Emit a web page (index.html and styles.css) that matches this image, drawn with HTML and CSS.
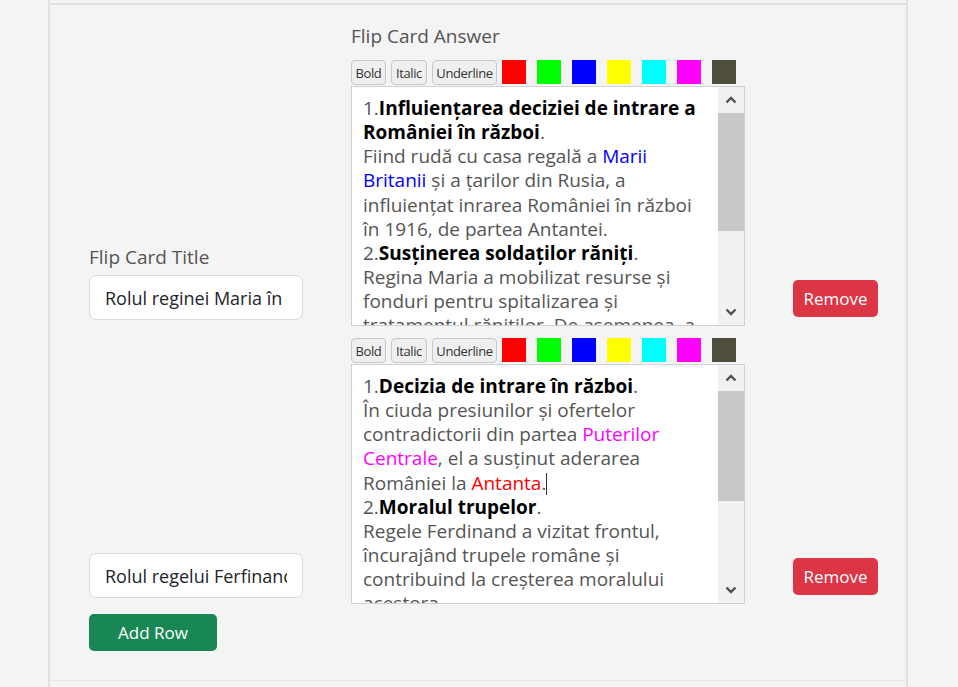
FILE: index.html
```html
<!DOCTYPE html>
<html lang="ro">
<head>
<meta charset="utf-8">
<title>Flip Cards</title>
<link rel="stylesheet" href="styles.css">
</head>
<body>
<div class="table">
  <div class="row">
    <div class="grid">
      <div class="answer-head">Flip Card Answer</div>

      <div class="title-cell r1">
        <label class="label">Flip Card Title</label>
        <input class="title-input" type="text" value="Rolul reginei Maria în Primul Război Mondial">
      </div>
      <div class="answer-cell r1">
        <div class="toolbar">
          <button class="tb-btn w-bold">Bold</button>
          <button class="tb-btn w-italic">Italic</button>
          <button class="tb-btn w-under">Underline</button>
          <span class="swatch red"></span>
          <span class="swatch green"></span>
          <span class="swatch blue"></span>
          <span class="swatch yellow"></span>
          <span class="swatch cyan"></span>
          <span class="swatch magenta"></span>
          <span class="swatch dark"></span>
        </div>
        <div class="editor">
          <div class="editor-content" contenteditable="true">
            <div>1.<b>Influiențarea deciziei de intrare a României în război</b>.</div>
            <div>Fiind rudă cu casa regală a <span class="c-blue">Marii Britanii</span> și a țarilor din Rusia, a influiențat inrarea României în război în 1916, de partea Antantei.</div>
            <div>2.<b>Susținerea soldaților răniți</b>.</div>
            <div>Regina Maria a mobilizat resurse și fonduri pentru spitalizarea și tratamentul rănitilor. De asemenea, a lucrat ca infirmieră în spitalele de campanie.</div>
          </div>
          <div class="scrollbar">
            <div class="sb-btn"><svg width="12" height="8" viewBox="0 0 12 8"><path d="M1.5 6.5 L6 2 L10.5 6.5" fill="none" stroke="#505050" stroke-width="2.4"/></svg></div>
            <div class="sb-track"><div class="sb-thumb t1"></div></div>
            <div class="sb-btn"><svg width="12" height="8" viewBox="0 0 12 8"><path d="M1.5 1.5 L6 6 L10.5 1.5" fill="none" stroke="#505050" stroke-width="2.4"/></svg></div>
          </div>
        </div>
      </div>
      <div class="remove-cell r1"><button class="btn btn-danger">Remove</button></div>

      <div class="title-cell r2">
        <input class="title-input" type="text" value="Rolul regelui Ferfinand I în Primul Război Mondial">
      </div>
      <div class="answer-cell r2">
        <div class="toolbar">
          <button class="tb-btn w-bold">Bold</button>
          <button class="tb-btn w-italic">Italic</button>
          <button class="tb-btn w-under">Underline</button>
          <span class="swatch red"></span>
          <span class="swatch green"></span>
          <span class="swatch blue"></span>
          <span class="swatch yellow"></span>
          <span class="swatch cyan"></span>
          <span class="swatch magenta"></span>
          <span class="swatch dark"></span>
        </div>
        <div class="editor">
          <div class="editor-content" contenteditable="true">
            <div>1.<b>Decizia de intrare în război</b>.</div>
            <div>În ciuda presiunilor și ofertelor contradictorii din partea <span class="c-magenta">Puterilor Centrale</span>, el a susținut aderarea României la <span class="c-red">Antanta</span>.<span class="caret"></span></div>
            <div>2.<b>Moralul trupelor</b>.</div>
            <div>Regele Ferdinand a vizitat frontul, încurajând trupele române și contribuind la creșterea moralului acestora.</div>
          </div>
          <div class="scrollbar">
            <div class="sb-btn"><svg width="12" height="8" viewBox="0 0 12 8"><path d="M1.5 6.5 L6 2 L10.5 6.5" fill="none" stroke="#505050" stroke-width="2.4"/></svg></div>
            <div class="sb-track"><div class="sb-thumb t2"></div></div>
            <div class="sb-btn"><svg width="12" height="8" viewBox="0 0 12 8"><path d="M1.5 1.5 L6 6 L10.5 1.5" fill="none" stroke="#505050" stroke-width="2.4"/></svg></div>
          </div>
        </div>
      </div>
      <div class="remove-cell r2"><button class="btn btn-danger">Remove</button></div>

      <div class="add-cell"><button class="btn btn-success">Add Row</button></div>
    </div>
  </div>
</div>
</body>
</html>
```

FILE: styles.css
```css
* { box-sizing: border-box; }
html, body { margin: 0; padding: 0; }
body {
  background: #f4f4f4;
  font-family: "Open Sans", "Noto Sans", sans-serif;
  color: #212529;
  height: 687px;
  overflow: hidden;
}
.table {
  margin-left: 48px;
  width: 860px;
  height: 687px;
  border-left: 2px solid #dee2e6;
  border-right: 2px solid #dee2e6;
  padding-top: 3px;
}
.row {
  border-top: 2px solid #dee2e6;
  border-bottom: 1px solid #e3e4ec;
  height: 678px;
  padding: 18px 0 0 39px;
}
.grid {
  display: grid;
  grid-template-columns: 214px 394px 85px;
  column-gap: 48px;
}
.answer-head {
  grid-column: 2;
  grid-row: 1;
  font-size: 19px;
  line-height: 27px;
  color: #555;
  margin-bottom: 10px;
}
.r1 { grid-row: 2; }
.r2 { grid-row: 3; margin-top: 12px; }
.title-cell { grid-column: 1; align-self: end; margin-bottom: 6px; display: flex; flex-direction: column; }
.answer-cell { grid-column: 2; }
.remove-cell { grid-column: 3; align-self: end; margin-bottom: 9px; }
.add-cell { grid-column: 1; grid-row: 4; margin-top: 10px; }

.label {
  font-size: 19px;
  line-height: 27px;
  color: #555;
  margin-bottom: 4px;
}
.title-input {
  width: 214px;
  height: 45px;
  border: 1px solid #d6d9de;
  border-radius: 7px;
  background: #fff;
  padding: 0 15px;
  font-family: "Open Sans", "Noto Sans", sans-serif;
  font-size: 18px;
  color: #212529;
  outline: none;
}

.toolbar {
  display: flex;
  align-items: flex-start;
  gap: 5px;
  height: 25px;
  margin-bottom: 1px;
}
.tb-btn {
  height: 25px;
  padding: 0;
  border: 1px solid #c8c8c8;
  border-radius: 4px;
  background: #efefef;
  color: #333;
  font-family: "Open Sans", "Noto Sans", sans-serif;
  font-size: 13px;
  letter-spacing: -0.4px;
}
.w-bold { width: 35px; }
.w-italic { width: 36px; }
.w-under { width: 65px; }
.swatch {
  width: 24px;
  height: 24px;
  margin-right: 6px;
}
.swatch:last-child { margin-right: 0; }
.red { background: #ff0000; }
.green { background: #00ff00; }
.blue { background: #0000ff; }
.yellow { background: #ffff00; }
.cyan { background: #00ffff; }
.magenta { background: #ff00ff; }
.dark { background: #4e4d3e; }

.editor {
  display: flex;
  height: 240px;
  border: 1px solid #d0d0d0;
  background: #fff;
}
.editor-content {
  flex: 1;
  overflow: hidden;
  padding: 9px 10px 0 11px;
  font-size: 19px;
  line-height: 24.15px;
  color: #555;
  outline: none;
}
.editor-content b { color: #000; font-weight: 700; }
.c-blue { color: #0000ff; }
.c-magenta { color: #ff00ff; }
.c-red { color: #ff0000; }
.caret {
  display: inline-block;
  width: 1px;
  height: 22px;
  background: #333;
  vertical-align: -5px;
}

.scrollbar {
  width: 26px;
  background: #f1f1f1;
  display: flex;
  flex-direction: column;
}
.sb-btn {
  height: 26px;
  display: flex;
  align-items: center;
  justify-content: center;
}
.sb-track { flex: 1; }
.sb-thumb { background: #c8c8c8; }
.t1 { height: 118px; }
.t2 { height: 110px; }

.btn {
  height: 37px;
  border: none;
  border-radius: 5px;
  color: #fff;
  font-family: "Open Sans", "Noto Sans", sans-serif;
  font-size: 17px;
  padding: 0;
}
.btn-danger { background: #dc3545; width: 85px; }
.btn-success { background: #198754; width: 128px; }
```
